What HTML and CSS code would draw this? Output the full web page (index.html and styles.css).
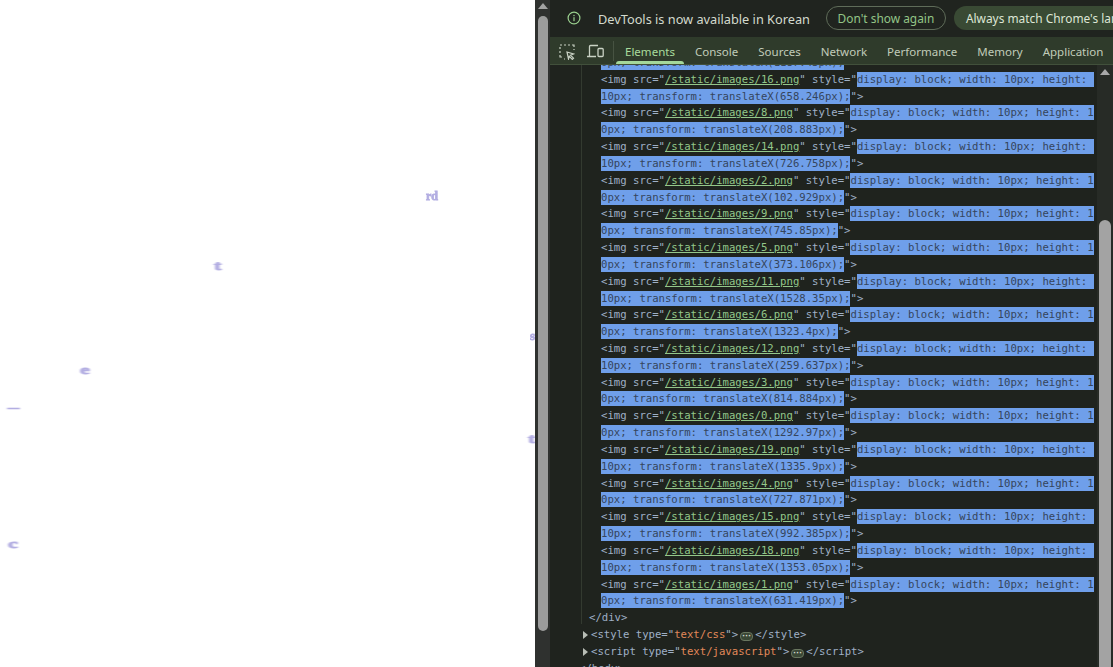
FILE: index.html
```html
<!DOCTYPE html>
<html lang="en">
<head>
<meta charset="utf-8">
<title>DevTools</title>
<link rel="stylesheet" href="styles.css">
</head>
<body>
<main class="canvas">
  <span class="glyph g-rd">rd</span>
  <span class="glyph g-t">t</span>
  <span class="glyph g-s">s</span>
  <span class="glyph g-e">e</span>
  <span class="glyph g-dash">–</span>
  <span class="glyph g-u">t</span>
  <span class="glyph g-c">c</span>
</main>
<div class="page-scroll">
  <div class="arrow"></div>
  <div class="page-thumb"></div>
</div>
<section class="devtools">
  <div class="infobar">
    <svg class="info-icon" viewBox="0 0 14 14" width="14" height="14"><circle cx="7" cy="7" r="5.9" fill="none" stroke="#9ad08e" stroke-width="1.2"/><rect x="6.4" y="6.2" width="1.2" height="4" fill="#9ad08e"/><rect x="6.4" y="3.9" width="1.2" height="1.3" fill="#9ad08e"/></svg>
    <span class="info-text">DevTools is now available in Korean</span>
    <button class="btn btn-outline">Don't show again</button>
    <button class="btn btn-fill">Always match Chrome's language</button>
  </div>
  <nav class="tabbar">
    <svg class="tool" viewBox="0 0 16 16" width="16" height="16"><path d="M1 1h2M5 1h2M9 1h2M13 1h2v2M1 3v2M1 7v2M1 11v2h2M15 5v1M5 15h1" fill="none" stroke="#c9d2c4" stroke-width="1.2"/><path d="M8 8l6.5 2-3 1.200 3 3-1.200 1.200-3-3-.8 2.600z" fill="none" stroke="#c9d2c4" stroke-width="1.200"/></svg>
    <svg class="tool tool-device" viewBox="0 0 17 15" width="17" height="15"><path d="M2.500 12V2.500a1 1 0 0 1 1-1H11M0 12.500h9" fill="none" stroke="#c9d2c4" stroke-width="1.300"/><rect x="11" y="4.500" width="5.200" height="8" rx="1" fill="none" stroke="#c9d2c4" stroke-width="1.300"/></svg>
    <span class="tool-sep"></span>
    <a class="tab tab-active">Elements</a>
    <a class="tab">Console</a>
    <a class="tab">Sources</a>
    <a class="tab">Network</a>
    <a class="tab">Performance</a>
    <a class="tab">Memory</a>
    <a class="tab">Application</a>
  </nav>
  <div class="panel">
    <div class="tree">
      <div class="lines">
        <div class="row"><span class="sel">0px; transform: translateX(1187.43px);</span></div>
        <div class="row"><span class="t">&lt;img src="</span><a class="v">/static/images/16.png</a><span class="t">" style="</span><span class="sel">display: block; width: 10px; height: </span></div>
        <div class="row"><span class="sel">10px; transform: translateX(658.246px);</span><span class="t">"&gt;</span></div>
        <div class="row"><span class="t">&lt;img src="</span><a class="v">/static/images/8.png</a><span class="t">" style="</span><span class="sel">display: block; width: 10px; height: 1</span></div>
        <div class="row"><span class="sel">0px; transform: translateX(208.883px);</span><span class="t">"&gt;</span></div>
        <div class="row"><span class="t">&lt;img src="</span><a class="v">/static/images/14.png</a><span class="t">" style="</span><span class="sel">display: block; width: 10px; height: </span></div>
        <div class="row"><span class="sel">10px; transform: translateX(726.758px);</span><span class="t">"&gt;</span></div>
        <div class="row"><span class="t">&lt;img src="</span><a class="v">/static/images/2.png</a><span class="t">" style="</span><span class="sel">display: block; width: 10px; height: 1</span></div>
        <div class="row"><span class="sel">0px; transform: translateX(102.929px);</span><span class="t">"&gt;</span></div>
        <div class="row"><span class="t">&lt;img src="</span><a class="v">/static/images/9.png</a><span class="t">" style="</span><span class="sel">display: block; width: 10px; height: 1</span></div>
        <div class="row"><span class="sel">0px; transform: translateX(745.85px);</span><span class="t">"&gt;</span></div>
        <div class="row"><span class="t">&lt;img src="</span><a class="v">/static/images/5.png</a><span class="t">" style="</span><span class="sel">display: block; width: 10px; height: 1</span></div>
        <div class="row"><span class="sel">0px; transform: translateX(373.106px);</span><span class="t">"&gt;</span></div>
        <div class="row"><span class="t">&lt;img src="</span><a class="v">/static/images/11.png</a><span class="t">" style="</span><span class="sel">display: block; width: 10px; height: </span></div>
        <div class="row"><span class="sel">10px; transform: translateX(1528.35px);</span><span class="t">"&gt;</span></div>
        <div class="row"><span class="t">&lt;img src="</span><a class="v">/static/images/6.png</a><span class="t">" style="</span><span class="sel">display: block; width: 10px; height: 1</span></div>
        <div class="row"><span class="sel">0px; transform: translateX(1323.4px);</span><span class="t">"&gt;</span></div>
        <div class="row"><span class="t">&lt;img src="</span><a class="v">/static/images/12.png</a><span class="t">" style="</span><span class="sel">display: block; width: 10px; height: </span></div>
        <div class="row"><span class="sel">10px; transform: translateX(259.637px);</span><span class="t">"&gt;</span></div>
        <div class="row"><span class="t">&lt;img src="</span><a class="v">/static/images/3.png</a><span class="t">" style="</span><span class="sel">display: block; width: 10px; height: 1</span></div>
        <div class="row"><span class="sel">0px; transform: translateX(814.884px);</span><span class="t">"&gt;</span></div>
        <div class="row"><span class="t">&lt;img src="</span><a class="v">/static/images/0.png</a><span class="t">" style="</span><span class="sel">display: block; width: 10px; height: 1</span></div>
        <div class="row"><span class="sel">0px; transform: translateX(1292.97px);</span><span class="t">"&gt;</span></div>
        <div class="row"><span class="t">&lt;img src="</span><a class="v">/static/images/19.png</a><span class="t">" style="</span><span class="sel">display: block; width: 10px; height: </span></div>
        <div class="row"><span class="sel">10px; transform: translateX(1335.9px);</span><span class="t">"&gt;</span></div>
        <div class="row"><span class="t">&lt;img src="</span><a class="v">/static/images/4.png</a><span class="t">" style="</span><span class="sel">display: block; width: 10px; height: 1</span></div>
        <div class="row"><span class="sel">0px; transform: translateX(727.871px);</span><span class="t">"&gt;</span></div>
        <div class="row"><span class="t">&lt;img src="</span><a class="v">/static/images/15.png</a><span class="t">" style="</span><span class="sel">display: block; width: 10px; height: </span></div>
        <div class="row"><span class="sel">10px; transform: translateX(992.385px);</span><span class="t">"&gt;</span></div>
        <div class="row"><span class="t">&lt;img src="</span><a class="v">/static/images/18.png</a><span class="t">" style="</span><span class="sel">display: block; width: 10px; height: </span></div>
        <div class="row"><span class="sel">10px; transform: translateX(1353.05px);</span><span class="t">"&gt;</span></div>
        <div class="row"><span class="t">&lt;img src="</span><a class="v">/static/images/1.png</a><span class="t">" style="</span><span class="sel">display: block; width: 10px; height: 1</span></div>
        <div class="row"><span class="sel">0px; transform: translateX(631.419px);</span><span class="t">"&gt;</span></div>
        <div class="row row-close"><span class="t">&lt;/div&gt;</span></div>
        <div class="row row-node"><i class="caret"></i><span class="t">&lt;style type="</span><span class="o">text/css</span><span class="t">"&gt;</span><b class="dots">···</b><span class="t">&lt;/style&gt;</span></div>
        <div class="row row-node"><i class="caret"></i><span class="t">&lt;script type="</span><span class="o">text/javascript</span><span class="t">"&gt;</span><b class="dots">···</b><span class="t">&lt;/script&gt;</span></div>
        <div class="row row-end"><span class="t">&lt;/body&gt;</span></div>
      </div>
    </div>
    <div class="tree-scroll">
      <div class="arrow arrow-inner"></div>
      <div class="tree-thumb"></div>
    </div>
  </div>
</section>
</body>
</html>
```
FILE: styles.css
```css
* { box-sizing: border-box; }
html, body { margin: 0; height: 100%; overflow: hidden; }
body { display: flex; width: 1113px; height: 667px; background: #fff; font-family: "Noto Sans", "Liberation Sans", sans-serif; }

.canvas { position: relative; flex: 0 0 535px; height: 667px; overflow: hidden; background: #fff; }
.glyph { position: absolute; font-family: "Liberation Serif", serif; font-weight: 700; font-size: 13px; line-height: 14px; color: #b3aee2; -webkit-text-stroke: .8px #b3aee2; filter: blur(.55px); }
.g-rd { left: 426px; top: 189px; font-size: 12px; }
.g-t { left: 214px; top: 259px; transform: scaleX(1.7); transform-origin: left; }
.g-s { left: 530px; top: 329px; }
.g-e { left: 80px; top: 363px; transform: scaleX(1.7); transform-origin: left; }
.g-dash { left: 8px; top: 400px; transform: scaleX(1.7); transform-origin: left; }
.g-u { left: 528px; top: 432px; transform: scaleX(1.7); transform-origin: left; }
.g-c { left: 8px; top: 537px; transform: scaleX(1.7); transform-origin: left; }

.page-scroll { flex: 0 0 15px; height: 667px; background: #2f312f; padding: 3px 2px 0 3px; display: flex; flex-direction: column; }
.arrow { width: 0; height: 0; border-left: 5px solid transparent; border-right: 5px solid transparent; border-bottom: 6px solid #a3a3a3; }
.page-thumb { width: 10px; height: 615px; margin-top: 7px; background: #9c9c9c; border-radius: 5px; }

.devtools { flex: 1; min-width: 0; height: 667px; display: flex; flex-direction: column; background: #1f231e; }
.infobar { flex: 0 0 37px; display: flex; align-items: center; padding-left: 17px; background: #20241f; white-space: nowrap; overflow: hidden; }
.info-icon { flex: none; margin-top: -1px; }
.info-text { flex: none; margin-left: 17px; font-size: 12.76px; color: #d3dacd; }
.btn { flex: none; height: 24px; width: 120px; padding: 0; border-radius: 12px; font: 11.9px "Noto Sans", sans-serif; margin-top: -1px; }
.btn-outline { margin-left: 16px; border: 1px solid #5f6c59; background: transparent; color: #93c487; }
.btn-fill { width: 190px; margin-left: 8px; padding-left: 12px; text-align: left; border: 0; background: #394a34; color: #dde6d5; }

.tabbar { flex: 0 0 28px; display: flex; align-items: center; padding-left: 9px; background: #2f3b2b; border-bottom: 1px solid #41503b; overflow: hidden; }
.tool { flex: none; margin-top: 2px; }
.tool-device { margin-left: 12px; }
.tool-sep { flex: none; width: 1px; height: 20px; margin: 0 1px 0 9px; background: #475342; }
.tab { position: relative; flex: none; height: 27px; line-height: 29px; padding: 0 10px; font-size: 11.53px; color: #c0cbb9; white-space: nowrap; }
.tab-active { color: #a9dc9c; }
.tab-active::after { content: ""; position: absolute; left: 1px; right: 1px; bottom: 0; height: 3px; border-radius: 3px 3px 0 0; background: #a5d89a; }

.panel { flex: 1; min-height: 0; display: flex; }
.tree { position: relative; flex: 1; min-width: 0; overflow: hidden; background: #1f231e; }
.tree::before { content: ""; position: absolute; left: 31px; top: 0; height: 559px; width: 1px; background: #333a30; }
.lines { margin-top: -10.1px; font-family: "DejaVu Sans Mono", monospace; font-size: 10.63px; color: #9fb0c6; }
.row { height: 16.83px; line-height: 16.83px; padding-left: 51px; white-space: pre; }
.row-close { padding-left: 39px; }
.row-node { position: relative; padding-left: 41px; }
.row-end { padding-left: 29px; }
.sel { display: inline-block; height: 15px; line-height: 15px; background: #6f9fea; color: #35455c; }
.t { color: #9fb0c6; }
.v { color: #93c78a; text-decoration: underline; }
.o { color: #e2895a; }
.caret { position: absolute; left: 33px; top: 4px; width: 0; height: 0; border-top: 4px solid transparent; border-bottom: 4px solid transparent; border-left: 5px solid #b8bdb5; }
.dots { display: inline-block; width: 13px; height: 9px; margin: 0 2px; border: 1px solid #69765f; border-radius: 4px; background: #3a4735; color: #d6ddd0; font: 700 9px/6px "Liberation Sans", sans-serif; text-align: center; vertical-align: -1px; }

.tree-scroll { position: relative; flex: 0 0 16px; background: #272b26; padding: 4px 0 0 3px; }
.arrow-inner { border-bottom-color: #a8a8a8; }
.tree-thumb { position: absolute; left: 2px; top: 155px; bottom: 0; width: 12px; background: #a3a3a3; border-radius: 6px 6px 0 0; }
```
